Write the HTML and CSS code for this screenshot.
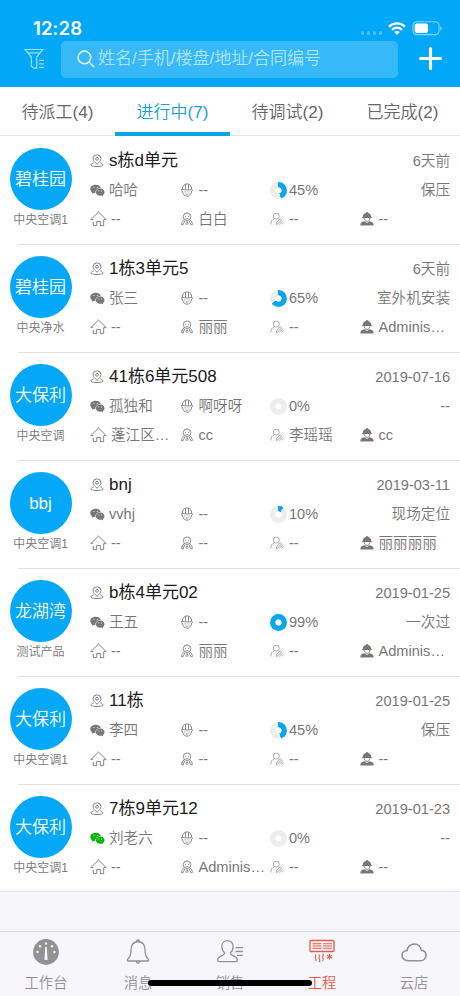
FILE: index.html
```html
<!DOCTYPE html>
<html lang="zh-CN">
<head>
<meta charset="utf-8">
<meta name="viewport" content="width=device-width, initial-scale=1">
<title>工程</title>
<link rel="stylesheet" href="styles.css">
</head>
<body>
<svg class="sprite" aria-hidden="true">
  <symbol id="pin" viewBox="0 0 14 14"><path d="M7 10.300C5.200 8.300 3 6.800 3 4.800a4 4 0 0 1 8 0C11 6.800 8.800 8.300 7 10.300Z"/><circle cx="7" cy="4.800" r="1.400"/><path d="M3.800 8.800C2 9.300 1 10.200 1 10.900c0 1 2.700 1.600 6 1.600s6-.600 6-1.600c0-.700-1-1.600-2.800-2.100"/></symbol>
  <symbol id="wechat" viewBox="0 0 15 13"><path fill="currentColor" stroke="none" fill-rule="evenodd" d="M5.600.8C2.500.8.300 2.700.300 5c0 1.400.700 2.500 2 3.300l-.500 1.500 1.900-.900c.6.200 1.100.2 1.700.2C5.100 6 7.400 3.900 10.700 3.900 10.200 2 8.200.8 5.600.8ZM3.900 2.900a.55.55 0 1 1 0 1.100.55.55 0 0 1 0-1.100Zm3.500 0a.55.55 0 1 1 0 1.100.55.55 0 0 1 0-1.100ZM10.200 4.500C7.700 4.500 5.900 6.200 5.900 8.200s1.900 3.600 4.300 3.600c.5 0 1-.1 1.500-.2l1.500.8-.4-1.300c1.100-.800 1.700-1.700 1.700-2.900 0-2-1.900-3.700-4.300-3.700ZM8.800 6.400a.5.5 0 1 1 0 1 .5.5 0 0 1 0-1Zm2.800 0a.5.5 0 1 1 0 1 .5.5 0 0 1 0-1Z"/></symbol>
  <symbol id="house" viewBox="0 0 17 16"><path d="M3.300 8.600H.8L8.500 1l7.700 7.600h-2.500v6h-3.400v-4.200H6.700v4.200H3.300V11"/></symbol>
  <symbol id="helmet" viewBox="0 0 14 15"><path d="M2 6.500C2 3.300 4.200.9 7 .9s5 2.400 5 5.600M1.600 6.700c3.500 1 7.300 1 10.800 0 .9.400.7 1.600-.2 1.900M1.600 6.700c-.9.400-.7 1.600.2 1.900M2 8.300c.2 3.300 2.300 5.900 5 5.900s4.800-2.600 5-5.900M5.400 1.300v5.900M8.600 1.300v5.900M4.300 9.600h1.200M8.500 9.600h1.200M5.400 11.600c1 .6 2.200.6 3.200 0"/></symbol>
  <symbol id="designer" viewBox="0 0 14 15"><circle cx="7" cy="5" r="4"/><path d="M4.900 4.600h1M8.100 4.600h1M5.400 6.600c1 .8 2.200.8 3.200 0M4.300 8.200C2.500 9.200 1.300 11 1.300 13.600h1.600L4.800 9.100M9.700 8.200c1.800 1 3 2.800 3 5.400h-1.600L9.200 9.100M7 9.100v1.700"/><circle cx="7" cy="12.100" r="1.200"/></symbol>
  <symbol id="sign" viewBox="0 0 15 14"><circle cx="6.800" cy="3.900" r="3.200"/><path d="M4.900 6.600C2.500 7.400 1 9.500.8 12.900M8.800 6.600l.9.700M6.600 12.900l.4-1.900 3.900-4.300 1.500 1.200-4.100 4.400-1.700.6ZM10 12.900l3.700-4.100M12.600 12.700l1.700-2.200"/></symbol>
  <symbol id="worker" viewBox="0 0 14 14"><path fill="currentColor" stroke="none" d="M2.700 5C2.800 2.600 4.300 1.200 5.700.9L6 .3h2l.3.600C9.700 1.200 11.200 2.600 11.300 5h.5v.9H2.200V5ZM.3 13.500C.3 10.700 1.500 9.800 4.500 9.200L7 11l2.500-1.800c3 .6 4.200 1.500 4.200 4.300Z"/><path d="M4 5.800c.1 2 1.300 3.600 3 3.600s2.900-1.600 3-3.600"/></symbol>
</svg>

<header class="top">
  <div class="status">
    <span class="time">12:28</span>
    <div class="signals">
      <span class="dots"><i></i><i></i><i></i><i></i></span>
      <svg class="wifi" viewBox="0 0 18 13"><path fill="none" stroke="#fff" stroke-width="2.400" d="M1 4.700c4.500-4.400 11.500-4.400 16 0M4 7.800c2.900-2.700 7.100-2.700 10 0"/><path fill="#fff" d="M6.200 10c1.600-1.500 4-1.500 5.600 0L9 12.900Z"/></svg>
      <svg class="battery" viewBox="0 0 31 15"><rect x="1" y=".8" width="26" height="12.800" rx="3.600" fill="none" stroke="#8bd4fb" stroke-width="1.100"/><rect x="2.700" y="2.500" width="13.300" height="9.400" rx="1.800" fill="#fff"/><path fill="#8bd4fb" d="M28.400 5c1.800.6 1.800 3.800 0 4.400Z"/></svg>
    </div>
  </div>
  <div class="tools">
    <svg class="filter" viewBox="0 0 22 22"><path d="M1.200 1.500h17.600L12.700 9v11.200H9.500L7.300 18V9L1.200 1.500ZM4.500 4.800h11M15.200 12.300H20M15.200 15.800H20M15.200 19.300H20"/></svg>
    <div class="search">
      <svg viewBox="0 0 18 18"><circle cx="7.400" cy="7.400" r="6.300"/><path d="m12 12 5 5"/></svg>
      <span>姓名/手机/楼盘/地址/合同编号</span>
    </div>
    <svg class="plus" viewBox="0 0 22 22"><path d="M11 1.500v19M1.500 11h19"/></svg>
  </div>
</header>

<nav class="tabs">
  <span>待派工(4)</span><span class="on">进行中(7)</span><span>待调试(2)</span><span>已完成(2)</span>
</nav>

<main class="list">
  <article class="row">
    <div class="who"><b>碧桂园</b><small>中央空调1</small></div>
    <div class="info">
      <div class="line head"><h2><svg><use href="#pin"/></svg>s栋d单元</h2><time>6天前</time></div>
      <div class="line"><span><svg class="chat"><use href="#wechat"/></svg><em>哈哈</em></span><span><svg><use href="#helmet"/></svg><em>--</em></span><span><i class="ring" style="--p:45%"></i><em>45%</em></span><span class="stage">保压</span></div>
      <div class="line"><span><svg class="home"><use href="#house"/></svg><em>--</em></span><span><svg><use href="#designer"/></svg><em>白白</em></span><span><svg class="thin"><use href="#sign"/></svg><em>--</em></span><span><svg><use href="#worker"/></svg><em>--</em></span></div>
    </div>
  </article>
  <article class="row">
    <div class="who"><b>碧桂园</b><small>中央净水</small></div>
    <div class="info">
      <div class="line head"><h2><svg><use href="#pin"/></svg>1栋3单元5</h2><time>6天前</time></div>
      <div class="line"><span><svg class="chat"><use href="#wechat"/></svg><em>张三</em></span><span><svg><use href="#helmet"/></svg><em>--</em></span><span><i class="ring" style="--p:65%"></i><em>65%</em></span><span class="stage">室外机安装</span></div>
      <div class="line"><span><svg class="home"><use href="#house"/></svg><em>--</em></span><span><svg><use href="#designer"/></svg><em>丽丽</em></span><span><svg class="thin"><use href="#sign"/></svg><em>--</em></span><span><svg><use href="#worker"/></svg><em>Adminis…</em></span></div>
    </div>
  </article>
  <article class="row">
    <div class="who"><b>大保利</b><small>中央空调</small></div>
    <div class="info">
      <div class="line head"><h2><svg><use href="#pin"/></svg>41栋6单元508</h2><time>2019-07-16</time></div>
      <div class="line"><span><svg class="chat"><use href="#wechat"/></svg><em>孤独和</em></span><span><svg><use href="#helmet"/></svg><em>啊呀呀</em></span><span><i class="ring" style="--p:0%"></i><em>0%</em></span><span class="stage">--</span></div>
      <div class="line"><span><svg class="home"><use href="#house"/></svg><em>蓬江区…</em></span><span><svg><use href="#designer"/></svg><em>cc</em></span><span><svg class="thin"><use href="#sign"/></svg><em>李瑶瑶</em></span><span><svg><use href="#worker"/></svg><em>cc</em></span></div>
    </div>
  </article>
  <article class="row">
    <div class="who"><b>bbj</b><small>中央空调1</small></div>
    <div class="info">
      <div class="line head"><h2><svg><use href="#pin"/></svg>bnj</h2><time>2019-03-11</time></div>
      <div class="line"><span><svg class="chat"><use href="#wechat"/></svg><em>vvhj</em></span><span><svg><use href="#helmet"/></svg><em>--</em></span><span><i class="ring" style="--p:10%"></i><em>10%</em></span><span class="stage">现场定位</span></div>
      <div class="line"><span><svg class="home"><use href="#house"/></svg><em>--</em></span><span><svg><use href="#designer"/></svg><em>--</em></span><span><svg class="thin"><use href="#sign"/></svg><em>--</em></span><span><svg><use href="#worker"/></svg><em>丽丽丽丽</em></span></div>
    </div>
  </article>
  <article class="row">
    <div class="who"><b>龙湖湾</b><small>测试产品</small></div>
    <div class="info">
      <div class="line head"><h2><svg><use href="#pin"/></svg>b栋4单元02</h2><time>2019-01-25</time></div>
      <div class="line"><span><svg class="chat"><use href="#wechat"/></svg><em>王五</em></span><span><svg><use href="#helmet"/></svg><em>--</em></span><span><i class="ring" style="--p:99%"></i><em>99%</em></span><span class="stage">一次过</span></div>
      <div class="line"><span><svg class="home"><use href="#house"/></svg><em>--</em></span><span><svg><use href="#designer"/></svg><em>丽丽</em></span><span><svg class="thin"><use href="#sign"/></svg><em>--</em></span><span><svg><use href="#worker"/></svg><em>Adminis…</em></span></div>
    </div>
  </article>
  <article class="row">
    <div class="who"><b>大保利</b><small>中央空调1</small></div>
    <div class="info">
      <div class="line head"><h2><svg><use href="#pin"/></svg>11栋</h2><time>2019-01-25</time></div>
      <div class="line"><span><svg class="chat"><use href="#wechat"/></svg><em>李四</em></span><span><svg><use href="#helmet"/></svg><em>--</em></span><span><i class="ring" style="--p:45%"></i><em>45%</em></span><span class="stage">保压</span></div>
      <div class="line"><span><svg class="home"><use href="#house"/></svg><em>--</em></span><span><svg><use href="#designer"/></svg><em>--</em></span><span><svg class="thin"><use href="#sign"/></svg><em>--</em></span><span><svg><use href="#worker"/></svg><em>--</em></span></div>
    </div>
  </article>
  <article class="row">
    <div class="who"><b>大保利</b><small>中央空调1</small></div>
    <div class="info">
      <div class="line head"><h2><svg><use href="#pin"/></svg>7栋9单元12</h2><time>2019-01-23</time></div>
      <div class="line"><span><svg class="chat green"><use href="#wechat"/></svg><em>刘老六</em></span><span><svg><use href="#helmet"/></svg><em>--</em></span><span><i class="ring" style="--p:0%"></i><em>0%</em></span><span class="stage">--</span></div>
      <div class="line"><span><svg class="home"><use href="#house"/></svg><em>--</em></span><span><svg><use href="#designer"/></svg><em>Adminis…</em></span><span><svg class="thin"><use href="#sign"/></svg><em>--</em></span><span><svg><use href="#worker"/></svg><em>--</em></span></div>
    </div>
  </article>
</main>

<footer class="bar">
  <a><svg viewBox="0 0 28 28"><circle cx="14" cy="14" r="12.900" fill="#929292" stroke="none"/><g fill="#f7f7fb" stroke="none"><circle cx="5.500" cy="14" r="1.200"/><circle cx="8" cy="8.300" r="1.200"/><circle cx="14" cy="5.500" r="1.200"/><circle cx="20" cy="8.300" r="1.200"/><circle cx="22.500" cy="14" r="1.200"/><path d="M13.200 9h1.600l.6 11a1.500 1.500 0 1 1-2.800 0Z"/></g></svg>工作台</a>
  <a><svg viewBox="0 0 28 28"><path d="M14 3.500c-5 .4-7 4-7 8.500 0 5-1 7.500-3.500 9.500-.5.800 0 1.500.9 1.500h19.200c.9 0 1.400-.7.900-1.500-2.500-2-3.500-4.500-3.500-9.500 0-4.500-2-8.100-7-8.500ZM12.600 3.300a1.400 1.400 0 0 1 2.800 0M12.300 23.300c.2 2.300 3.200 2.300 3.400 0"/></svg>消息</a>
  <a><svg viewBox="0 0 28 28"><path d="M11.500 2.700c-3.300 0-5.600 2.400-5.600 5.700 0 2.700 1 4.900 2.700 6.300.2 1.400-.5 2-2 2.600-3 1.100-5 2.100-5 4.700 0 1.200.6 1.700 1.600 1.700h16.600c1 0 1.600-.5 1.600-1.700 0-2.600-2-3.600-5-4.700-1.500-.6-2.200-1.200-2-2.600 1.700-1.400 2.700-3.600 2.700-6.300 0-3.300-2.300-5.700-5.600-5.700ZM19.500 9.700H27M19.500 13.500H27M21 17.300h6"/></svg>销售</a>
  <a class="on"><svg viewBox="0 0 28 28"><rect x="2" y="2.500" width="24" height="11" rx="1"/><path stroke-width="1.100" d="M4.500 5.700h9M4.500 8h9M4.500 10.300h9M15 5.700h9M15 8h9M15 10.300h9M7 16.500c2 1-.8 3 .9 4.500.5.800.2 1.500-.2 2M10.700 16.500c2 1.500-.8 3.500.9 5 .5.800.2 1.500-.2 2.500M14.600 15.500c2 1.500-.8 3.500.4 5 .5 1 .2 1.500-.5 2.500M21.500 16v5.500M19 17.300l5 3M24 17.300l-5 3"/></svg>工程</a>
  <a><svg viewBox="0 0 28 28"><path d="M8 22.700h12.500c3 0 5.500-2.200 5.500-5.200 0-2.700-2-4.900-4.700-5.200-.5-3.700-3.500-6.300-7-6.300-3.800 0-6.900 2.800-7.200 6.500C4.200 12.900 2 15 2 17.500c0 3 2.700 5.200 6 5.200Z" stroke-width="1.600"/></svg>云店</a>
  <div class="indicator"></div>
</footer>
</body>
</html>
```
FILE: styles.css
```css
* { box-sizing: border-box; }
body {
  margin: 0;
  width: 460px;
  height: 996px;
  overflow: hidden;
  display: flex;
  flex-direction: column;
  background: #f5f5fa;
  color: #777;
  font: 350 14.600px/20px "Liberation Sans", "Noto Sans CJK SC", sans-serif;
}
.sprite { position: absolute; width: 0; height: 0; }
svg { display: block; flex: none; fill: none; stroke: currentColor; }

.top { height: 87px; background: #02a8f8; padding-top: 17px; flex: none; }
.status {
  height: 23px;
  padding: 0 18px 0 33px;
  display: flex;
  align-items: center;
  justify-content: space-between;
  color: #fff;
}
.time { font: 600 18.500px/23px Inter, sans-serif; letter-spacing: .1px; }
.signals { display: flex; align-items: center; }
.dots { display: flex; gap: 2.500px; margin: 9px 6px 0 0; }
.dots i { width: 3.400px; height: 3.400px; border-radius: 50%; background: #4fc0fa; }
.wifi { width: 18px; height: 13px; margin-right: 6px; stroke: none; }
.battery { width: 31px; height: 15px; stroke: none; margin-right: -1px; }
.tools { display: flex; align-items: center; height: 38px; padding-left: 24px; }
.filter { width: 22px; height: 22px; color: #9bdbfc; stroke-width: 1.200; }
.search {
  width: 337px;
  height: 37px;
  margin: 0 21px 0 15px;
  padding-left: 16px;
  border-radius: 5px;
  background: #37b9f9;
  display: flex;
  align-items: center;
  gap: 3px;
  color: #b0e3fc;
  font-size: 17px;
}
.search svg { width: 18px; height: 18px; color: #e4f6fe; stroke-width: 1.500; }
.plus { width: 23px; height: 23px; color: #fff; stroke-width: 3; stroke-linecap: round; margin-top: -2px; }

.tabs {
  flex: none;
  height: 49px;
  display: grid;
  grid-template-columns: repeat(4, 1fr);
  background: #fff;
  border-bottom: 1px solid #e4e4e6;
  font-size: 17px;
  line-height: 51px;
  text-align: center;
  color: #666;
}
.tabs span { height: 49px; }
.tabs .on { color: #149fdc; border-bottom: 4px solid #0ea5e4; }

.list { flex: none; background: #fff; border-bottom: 1px solid #e8e8ec; }
.row { height: 108px; display: flex; padding: 12px 10px 0; position: relative; }
.row:last-child { height: 107px; }
.row + .row::before {
  content: "";
  position: absolute;
  top: 0;
  left: 18px;
  right: 0;
  height: 1px;
  background: #e1e1e4;
}
.who { width: 61px; margin-right: 19px; flex: none; display: flex; flex-direction: column; align-items: center; }
.who b {
  width: 62px;
  height: 62px;
  border-radius: 50%;
  background: #05a8f6;
  color: #fff;
  font-size: 17px;
  font-weight: 350;
  line-height: 63px;
  text-align: center;
}
.who small { font-size: 12px; line-height: 21px; white-space: nowrap; }
.info { flex: 1; min-width: 0; padding-top: 3px; }
.line { display: grid; grid-template-columns: repeat(4, 90px); height: 30px; align-items: center; margin-bottom: -1px; }
.head { height: 20px; margin-bottom: 4px; display: flex; justify-content: space-between; }
.head h2 { margin: 0; display: flex; align-items: center; font-size: 17px; font-weight: 400; color: #1b1b1b; }
.head svg { margin-right: 5px; }
.line span { display: flex; align-items: center; white-space: nowrap; }
.line em { font-style: normal; }
.line svg { width: 14px; height: 14px; color: #777; stroke-width: .9; }
.line span svg { margin-right: 4.500px; }
.line svg.chat { width: 15px; height: 13px; margin-right: 4px; }
.line svg.home { width: 17px; height: 16px; margin-right: 4px; }
.line svg.thin { color: #999; margin-right: 5px; }
.line svg.green { color: #0bb40b; }
.line .stage { justify-content: flex-end; }
.ring {
  width: 17px;
  height: 17px;
  margin-right: 2px;
  border-radius: 50%;
  background: radial-gradient(circle, #fff 2.800px, transparent 3.400px), conic-gradient(#0aa6ee var(--p), #ededed 0);
}

.bar {
  flex: none;
  margin-top: auto;
  height: 65px;
  border-top: 1px solid #d7d7dc;
  background: #f7f7fb;
  display: grid;
  grid-template-columns: repeat(5, 1fr);
  position: relative;
  color: #929296;
  font-size: 14.300px;
}
.bar a { display: flex; flex-direction: column; align-items: center; padding-top: 6px; }
.bar svg { width: 28px; height: 28px; margin-bottom: 7px; stroke-width: 1.300; }
.bar .on { color: #e65b4b; }
.indicator {
  position: absolute;
  left: 148px;
  top: 48px;
  width: 164px;
  height: 6px;
  border-radius: 3px;
  background: #000;
}
```
